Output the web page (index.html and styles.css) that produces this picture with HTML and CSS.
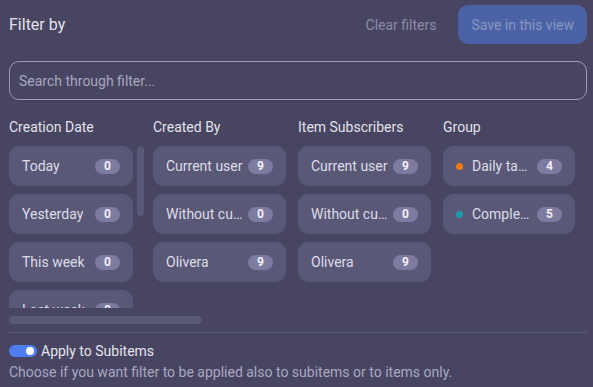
FILE: index.html
```html
<!DOCTYPE html>
<html lang="en">
<head>
  <meta charset="UTF-8" />
  <meta name="viewport" content="width=device-width, initial-scale=1.0"/>
  <title>Filter by</title>
  <link rel="stylesheet" href="styles.css">
</head>
<body>

  <div class="top">
    <h2 class="title">Filter by</h2>
    <div class="actions">
      <button class="clear-btn">Clear filters</button>
      <button class="save-btn">Save in this view</button>
    </div>
  </div>

  <input class="search" type="text" placeholder="Search through filter...">

  <div class="columns">
    <div class="column">
      <div class="heading">Creation Date</div>
      <div class="list with-bar">
        <div class="pills">
          <div class="pill"><span class="label">Today</span><span class="count">0</span></div>
          <div class="pill"><span class="label">Yesterday</span><span class="count">0</span></div>
          <div class="pill"><span class="label">This week</span><span class="count">0</span></div>
          <div class="pill"><span class="label">Last week</span><span class="count">0</span></div>
        </div>
        <div class="vbar"></div>
      </div>
    </div>

    <div class="column">
      <div class="heading">Created By</div>
      <div class="list">
        <div class="pills">
          <div class="pill"><span class="label">Current user</span><span class="count">9</span></div>
          <div class="pill"><span class="label">Without current user</span><span class="count">0</span></div>
          <div class="pill"><span class="label">Olivera</span><span class="count">9</span></div>
        </div>
      </div>
    </div>

    <div class="column">
      <div class="heading">Item Subscribers</div>
      <div class="list">
        <div class="pills">
          <div class="pill"><span class="label">Current user</span><span class="count">9</span></div>
          <div class="pill"><span class="label">Without current user</span><span class="count">0</span></div>
          <div class="pill"><span class="label">Olivera</span><span class="count">9</span></div>
        </div>
      </div>
    </div>

    <div class="column">
      <div class="heading">Group</div>
      <div class="list">
        <div class="pills">
          <div class="pill"><span class="dot orange"></span><span class="label">Daily tasks</span><span class="count">4</span></div>
          <div class="pill"><span class="dot teal"></span><span class="label">Completed</span><span class="count">5</span></div>
        </div>
      </div>
    </div>
  </div>

  <div class="hbar"></div>

  <hr class="divider">

  <label class="subitems">
    <span class="toggle"><span class="knob"></span></span>
    Apply to Subitems
  </label>
  <p class="hint">Choose if you want filter to be applied also to subitems or to items only.</p>

</body>
</html>
```

FILE: styles.css
```css
body {
  margin: 0;
  padding: 5px 6px 0 9px;
  background-color: #474561;
  font-family: Roboto, "Liberation Sans", sans-serif;
  font-size: 14px;
  color: #dddce8;
}

.top {
  display: flex;
  align-items: center;
  justify-content: space-between;
  height: 39px;
}

.title {
  margin: 0;
  font-size: 16px;
  font-weight: 400;
  color: #e4e3ec;
}

.actions {
  display: flex;
  align-items: center;
  gap: 22px;
}

.clear-btn {
  background: none;
  border: none;
  padding: 0;
  font: inherit;
  color: #8d8ba5;
}

.save-btn {
  height: 39px;
  padding: 0 13px;
  border: none;
  border-radius: 10px;
  background-color: #4b63a6;
  font: inherit;
  color: #8b96c4;
}

.search {
  display: block;
  box-sizing: border-box;
  width: 100%;
  height: 39px;
  margin-top: 17px;
  padding: 0 9px;
  border: 1px solid #9d9bb8;
  border-radius: 10px;
  background: transparent;
  font: inherit;
  color: #dddce8;
}

.search::placeholder {
  color: #a8a7bf;
}

.columns {
  display: grid;
  grid-template-columns: 132px 133px 133px 132px;
  column-gap: 12px;
  margin-top: 17px;
}

.heading {
  line-height: 20px;
  color: #e2e1eb;
  margin-bottom: 9px;
}

.list {
  height: 162px;
  overflow: hidden;
}

.with-bar {
  display: flex;
  gap: 4px;
  overflow: visible;
}

.with-bar .pills {
  width: 124px;
  height: 162px;
  overflow: hidden;
  flex-shrink: 0;
}

.pills {
  display: flex;
  flex-direction: column;
  gap: 8px;
}

.pill {
  display: flex;
  align-items: center;
  gap: 4px;
  height: 40px;
  flex-shrink: 0;
  padding: 0 13px;
  border-radius: 10px;
  background-color: #5a5877;
}

.label {
  min-width: 0;
  white-space: nowrap;
  overflow: hidden;
  text-overflow: ellipsis;
}

.count {
  flex-shrink: 0;
  width: 25px;
  height: 15px;
  margin-left: auto;
  line-height: 15px;
  border-radius: 8px;
  background-color: #7d7ba0;
  text-align: center;
  font-size: 12px;
  font-weight: 700;
  color: #f1f0f6;
}

.dot {
  flex-shrink: 0;
  width: 7px;
  height: 7px;
  border-radius: 50%;
  margin-right: 5px;
}

.dot.orange {
  background-color: #f57a12;
}

.dot.teal {
  background-color: #1f9bab;
}

.vbar {
  flex-shrink: 0;
  width: 7px;
  height: 70px;
  border-radius: 4px;
  background-color: #5a5877;
}

.hbar {
  width: 193px;
  height: 8px;
  margin-top: 8px;
  border-radius: 4px;
  background-color: #5a5877;
}

.divider {
  margin: 8px 0 0;
  border: none;
  border-top: 1px solid #5d5b7a;
}

.subitems {
  display: flex;
  align-items: center;
  gap: 4px;
  margin-top: 8px;
  line-height: 20px;
  color: #e4e3ec;
}

.toggle {
  display: flex;
  align-items: center;
  justify-content: flex-end;
  box-sizing: border-box;
  width: 28px;
  height: 12px;
  padding: 0 3px;
  border-radius: 6px;
  background-color: #4d7df0;
}

.knob {
  width: 8px;
  height: 8px;
  border-radius: 50%;
  background-color: #ffffff;
}

.hint {
  margin: 1px 0 0;
  line-height: 20px;
  color: #a9a8c0;
}
```
